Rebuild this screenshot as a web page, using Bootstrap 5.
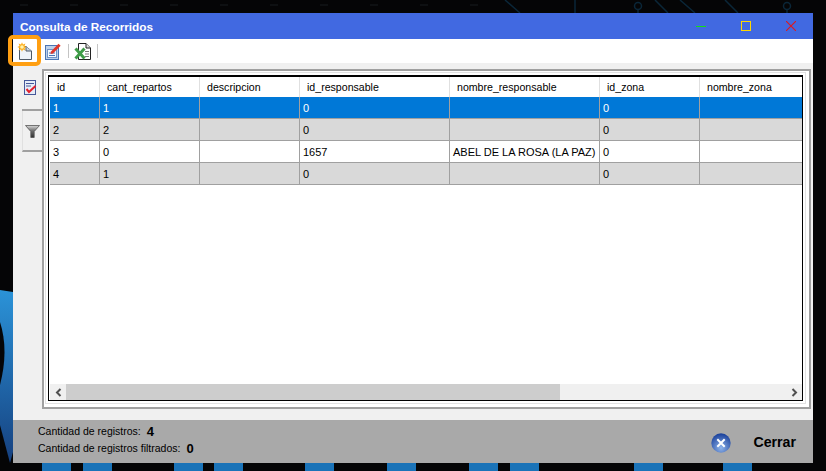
<!DOCTYPE html>
<html lang="en">
<head>
    <meta charset="UTF-8">
    <meta name="viewport" content="width=device-width, initial-scale=1.0">
    <title>Consulta de Recorridos</title>
    <link rel="stylesheet" href="https://cdn.jsdelivr.net/npm/bootstrap@5.3.0/dist/css/bootstrap.min.css">
    <style>
        html, body { height: 471px; overflow: hidden; }
        body { background-color: #050506; padding: 13px; position: relative; font-family: "Liberation Sans", Arial, sans-serif; font-size: 11px; color: #000; }
        .desk-bg { position: absolute; left: 0; top: 0; width: 826px; height: 471px; }
        .win { position: relative; height: 450px; width: 800px; background: #f0f0f0; }
        .win-title { height: 26px; background: #4169e1; color: #fff; font-weight: bold; font-size: 11.8px; padding-left: 7px; }
        .win-title-txt { padding-top: 3px; }
        .win-ctrls { gap: 35px; padding-right: 17px; }
        .tool-strip { position: relative; height: 24px; background: #fff; padding-left: 4px; }
        .tool-a { margin-right: 12px; }
        .tool-b { margin-right: 7px; }
        .tool-c { margin-right: 5px; }
        .tool-d { margin-right: 6px; }
        .tool-sep { width: 1px; height: 14px; background: #c4c4c4; }
        .tool-hl { position: absolute; left: -5px; top: -4px; width: 33px; height: 31px; border: 4px solid #ff9f12; border-radius: 5px; }
        .side-strip { width: 29px; padding: 14px 0 0 9px; flex: none; }
        .side-tab { height: 34px; border-bottom: 2px solid #a0a0a0; padding: 1px 0 0 2px; }
        .side-tab-on { height: 41px; border-left: 1px solid #e0e0e0; padding: 11px 0 0 2px; }
        .grid-frame { width: 769px; height: 340px; margin-top: 6px; border: 2px solid #a0a0a0; background: #fff; padding: 1px 3px 3px 1px; }
        .grid-frame-in { height: 100%; border: 1px solid #e2e2e2; padding: 2px 2px 2px 2px; background: #fff; }
        .grid-box { position: relative; height: 100%; border: 1px solid #000; border-top-width: 2px; padding-left: 1px; background: #fff; overflow: hidden; }
        .rec-tbl { table-layout: fixed; width: 752px; border-collapse: separate; border-spacing: 0; font-size: 11px; }
        .rec-tbl > thead > tr > th { height: 20px; padding: 1px 0 0 7px; font-weight: normal; font-size: 10.6px; vertical-align: middle; border: 0; border-right: 1px solid #e0e0e0; background: #fff; color: #000; white-space: nowrap; }
        .rec-tbl > tbody > tr > td { height: 22px; padding: 1px 0 0 3px; vertical-align: middle; border: 0; border-right: 1px solid #a0a0a0; border-bottom: 1px solid #a0a0a0; background: #fff; color: #000; white-space: nowrap; overflow: hidden; }
        .rec-tbl > tbody > tr.row-alt > td { background: #d9d9d9; }
        .rec-tbl > tbody > tr.row-sel > td { background: #0078d7; color: #fff; }
        .rec-tbl > thead > tr > th:last-child, .rec-tbl > tbody > tr > td:last-child { border-right: 0; }
        .col-s { width: 50px; }
        .col-m { width: 100px; }
        .col-l { width: 150px; }
        .col-end { width: 102px; }
        .h-scroll { position: absolute; left: 1px; right: 0; bottom: 0; height: 16px; background: #f0f0f0; }
        .h-scroll-btn { width: 16px; flex: none; color: #505050; }
        .h-scroll-thumb { width: 494px; background: #cdcdcd; }
        .status-strip { height: 43px; background: #a9a9a9; margin-top: auto; padding: 3px 17px 0 25px; font-size: 10.5px; }
        .status-line { height: 17px; }
        .status-num { font-weight: bold; font-size: 13px; margin-left: 6px; }
        .close-lbl { font-weight: bold; font-size: 14.2px; margin-left: 22px; }
    </style>
</head>
<body>

<!-- desktop wallpaper, only the edges show -->
<svg class="desk-bg" viewBox="0 0 826 471">
    <defs>
        <linearGradient id="wallBlue" x1="0" y1="0" x2="0" y2="1">
            <stop offset="0" stop-color="#2b93d8"/>
            <stop offset="1" stop-color="#16407f"/>
        </linearGradient>
    </defs>
    <path d="M0 290 L13 292 V452 L10 463 L0 425 Z" fill="url(#wallBlue)"/>
    <path d="M0 322 Q9 350 0 385 Z" fill="#050506"/>
    <g fill="#1a73b8">
        <rect x="42" y="463" width="29" height="8"/><rect x="83" y="463" width="29" height="8"/>
        <rect x="174" y="463" width="29" height="8"/><rect x="214" y="463" width="29" height="8"/>
        <rect x="305" y="463" width="29" height="8"/><rect x="387" y="463" width="29" height="8"/>
        <rect x="469" y="463" width="29" height="8"/><rect x="510" y="463" width="29" height="8"/>
        <rect x="634" y="463" width="29" height="8"/><rect x="723" y="463" width="29" height="8"/>
    </g>
    <g stroke="#0a2638" stroke-width="1.5" fill="none">
        <circle cx="638" cy="6" r="3.5"/><path d="M638 10 V14"/>
        <circle cx="787" cy="6" r="3.5"/><path d="M787 10 V14"/>
        <path d="M505 0 L520 13 M575 0 V13 M655 0 L668 13 M680 0 L695 13 M725 0 L738 13"/>
    </g>
    <g fill="#0e1012">
        <rect x="20" y="4" width="8" height="2"/><rect x="70" y="4" width="8" height="2"/><rect x="120" y="4" width="8" height="2"/>
        <rect x="170" y="4" width="8" height="2"/><rect x="220" y="4" width="8" height="2"/><rect x="270" y="4" width="8" height="2"/>
        <rect x="320" y="4" width="8" height="2"/><rect x="370" y="4" width="8" height="2"/><rect x="420" y="4" width="8" height="2"/>
        <rect x="470" y="4" width="8" height="2"/>
    </g>
</svg>

<div class="win d-flex flex-column">
    <!-- title bar -->
    <div class="win-title d-flex align-items-center justify-content-between flex-none">
        <span class="win-title-txt">Consulta de Recorridos</span>
        <div class="win-ctrls d-flex align-items-center">
            <svg width="10" height="10" viewBox="0 0 10 10"><path d="M0 5.5 H10" stroke="#12e012" stroke-width="1"/></svg>
            <svg width="10" height="10" viewBox="0 0 10 10"><rect x=".5" y=".5" width="9" height="9" fill="none" stroke="#ffd700"/></svg>
            <svg width="10" height="10" viewBox="0 0 10 10"><path d="M0 0 L10 10 M10 0 L0 10" stroke="#e0181c" stroke-width="1.1"/></svg>
        </div>
    </div>

    <!-- toolbar -->
    <div class="tool-strip d-flex align-items-center">
        <svg width="16" height="18" viewBox="0 0 16 18" class="tool-a">
            <path d="M2.5 4.5 H9 L14.5 9 V17.5 H2.5 Z" fill="#eef3fa" stroke="#4e5a68"/>
            <path d="M9 4.5 V9 H14.5" fill="#c9d6e6" stroke="#4e5a68"/>
            <path d="M5 .3 L6 2.5 L8.4 1.6 L7.5 4 L9.7 5 L7.5 6 L8.4 8.4 L6 7.5 L5 9.7 L4 7.5 L1.6 8.4 L2.5 6 L.3 5 L2.5 4 L1.6 1.6 L4 2.5 Z" fill="#ffb020"/>
            <circle cx="5" cy="5" r="1.8" fill="#fff3b0"/>
        </svg>
        <svg width="16" height="17" viewBox="0 0 16 17" class="tool-b">
            <rect x=".5" y="2.5" width="13" height="14" fill="#bcd0ea" stroke="#4a74b4"/>
            <rect x="2.5" y="6.5" width="9" height="8" fill="#f4f8fd" stroke="#6f93c8"/>
            <path d="M4 10 H10 M4 12.5 H10" stroke="#4a74b4"/>
            <path d="M6 8.5 L13.5 .8 L15.6 2.8 L8 10.5 L5.5 11 Z" fill="#e0352a"/>
        </svg>
        <div class="tool-sep tool-c"></div>
        <svg width="17" height="17" viewBox="0 0 17 17" class="tool-d">
            <path d="M4.5 .5 H12 L16.5 5 V16.5 H4.5 Z" fill="#fff" stroke="#222"/>
            <path d="M12 .5 V5 H16.5" fill="#ddd" stroke="#222"/>
            <path d="M11 8.5 H15 M11 11 H15 M11 13.5 H15" stroke="#777"/>
            <path d="M1.5 5.5 L10.5 15.5 M10.5 5.5 L1.5 15.5" stroke="#3f9c48" stroke-width="3"/>
        </svg>
        <div class="tool-sep"></div>
        <div class="tool-hl"></div>
    </div>

    <div class="d-flex flex-grow-1">
        <!-- side tabs -->
        <div class="side-strip">
            <div class="side-tab">
                <svg width="13" height="15" viewBox="0 0 13 15">
                    <rect x=".5" y=".5" width="11" height="14" fill="#e6ecf7" stroke="#46589a"/>
                    <path d="M2 3.5 H10 M2 6 H7" stroke="#46589a"/>
                    <path d="M2.5 9 L5 12 L11.5 6" fill="none" stroke="#e2202c" stroke-width="2"/>
                </svg>
            </div>
            <div class="side-tab side-tab-on">
                <svg width="15" height="13" viewBox="0 0 15 13">
                    <defs>
                        <linearGradient id="funnelFill" x1="0" y1="0" x2="0" y2="1">
                            <stop offset="0" stop-color="#d8d8d8"/>
                            <stop offset=".45" stop-color="#6e6e6e"/>
                            <stop offset="1" stop-color="#2e2e2e"/>
                        </linearGradient>
                    </defs>
                    <path d="M.5 .5 H14.5 L9.2 6.5 V12.5 H5.8 V6.5 Z" fill="url(#funnelFill)" stroke="#555" stroke-width=".8"/>
                </svg>
            </div>
        </div>

        <!-- data grid -->
        <div class="grid-frame">
            <div class="grid-frame-in">
                <div class="grid-box">
                    <table class="table mb-0 rec-tbl">
                        <colgroup>
                            <col class="col-s"><col class="col-m"><col class="col-m"><col class="col-l"><col class="col-l"><col class="col-m"><col class="col-end">
                        </colgroup>
                        <thead>
                            <tr>
                                <th>id</th>
                                <th>cant_repartos</th>
                                <th>descripcion</th>
                                <th>id_responsable</th>
                                <th>nombre_responsable</th>
                                <th>id_zona</th>
                                <th>nombre_zona</th>
                            </tr>
                        </thead>
                        <tbody>
                            <tr class="row-sel"><td>1</td><td>1</td><td></td><td>0</td><td></td><td>0</td><td></td></tr>
                            <tr class="row-alt"><td>2</td><td>2</td><td></td><td>0</td><td></td><td>0</td><td></td></tr>
                            <tr><td>3</td><td>0</td><td></td><td>1657</td><td>ABEL DE LA ROSA (LA PAZ)</td><td>0</td><td></td></tr>
                            <tr class="row-alt"><td>4</td><td>1</td><td></td><td>0</td><td></td><td>0</td><td></td></tr>
                        </tbody>
                    </table>
                    <div class="h-scroll d-flex">
                        <div class="h-scroll-btn d-flex align-items-center justify-content-center">
                            <svg width="7" height="9" viewBox="0 0 7 9"><path d="M5.5 1 L2 4.5 L5.5 8" fill="none" stroke="currentColor" stroke-width="2"/></svg>
                        </div>
                        <div class="h-scroll-thumb"></div>
                        <div class="flex-grow-1"></div>
                        <div class="h-scroll-btn d-flex align-items-center justify-content-center">
                            <svg width="7" height="9" viewBox="0 0 7 9"><path d="M1.5 1 L5 4.5 L1.5 8" fill="none" stroke="currentColor" stroke-width="2"/></svg>
                        </div>
                    </div>
                </div>
            </div>
        </div>
    </div>

    <!-- footer -->
    <div class="status-strip d-flex justify-content-between">
        <div>
            <div class="status-line d-flex align-items-center">Cantidad de registros: <span class="status-num">4</span></div>
            <div class="status-line d-flex align-items-center">Cantidad de registros filtrados: <span class="status-num">0</span></div>
        </div>
        <div class="d-flex align-items-center">
            <svg width="20" height="20" viewBox="0 0 20 20">
                <defs>
                    <radialGradient id="orb" cx=".5" cy=".75" r=".7">
                        <stop offset="0" stop-color="#8fb4ea"/>
                        <stop offset="1" stop-color="#1f459e"/>
                    </radialGradient>
                </defs>
                <circle cx="10" cy="10" r="9.7" fill="url(#orb)"/>
                <path d="M6.3 6.3 L13.7 13.7 M13.7 6.3 L6.3 13.7" stroke="#fff" stroke-width="2"/>
            </svg>
            <span class="close-lbl">Cerrar</span>
        </div>
    </div>
</div>

<script src="https://cdn.jsdelivr.net/npm/bootstrap@5.3.0/dist/js/bootstrap.bundle.min.js"></script>
</body>
</html>
